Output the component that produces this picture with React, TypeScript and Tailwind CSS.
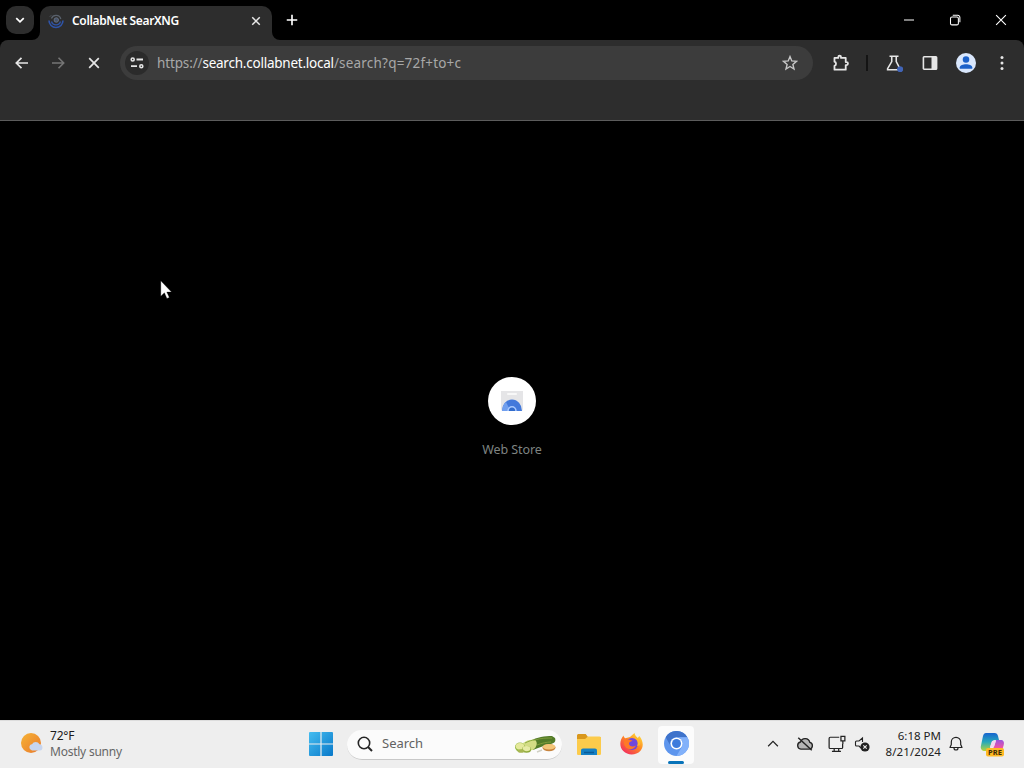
import type { ReactNode } from 'react'

function Icon({ size = 16, className = '', children }: { size?: number; className?: string; children: ReactNode }) {
  return (
    <svg
      width={size}
      height={size}
      viewBox="0 0 16 16"
      fill="none"
      stroke="currentColor"
      strokeWidth="1.6"
      className={`block shrink-0 ${className}`}
    >
      {children}
    </svg>
  )
}

function TabStrip() {
  return (
    <div className="flex h-10 items-start bg-black">
      <button className="ml-1.5 mt-1.5 flex h-7 w-7 items-center justify-center rounded-[10px] bg-[#2d2d2d] text-white">
        <Icon size={12}><path d="M3 5.5l5 5 5-5" strokeWidth="2.3" /></Icon>
      </button>

      <div className="relative ml-1.5 mt-1.5 flex h-[34px] w-[232px] items-center rounded-t-[10px] bg-[#2d2d2d] pb-[5px] pl-2 pr-[11px]">
        <svg className="absolute -left-2 bottom-0" width="8" height="8"><path d="M8 0v8H0a8 8 0 0 0 8-8z" fill="#2d2d2d" /></svg>
        <svg className="absolute -right-2 bottom-0" width="8" height="8"><path d="M0 0v8h8a8 8 0 0 1-8-8z" fill="#2d2d2d" /></svg>
        <Icon className="text-[#2f54a8]">
          <path d="M1 7.5a7 7 0 0 0 14 0" strokeWidth="1.6" />
          <path d="M3.5 8.5a4.7 4.7 0 0 0 9 0" strokeWidth="1.3" />
          <path d="M3.4 5.500A5 5 0 0 1 12.800 6" stroke="#59616c" strokeWidth="1.3" />
          <circle cx="8.300" cy="7" r="2.200" fill="#46536b" stroke="#667080" strokeWidth="1" />
          <path d="M1.5 4l2-2" stroke="#484d55" strokeWidth="1" />
        </Icon>
        <span className="ml-2 flex-1 whitespace-nowrap text-[12px] font-semibold tracking-[-0.34px] text-white">CollabNet SearXNG</span>
        <Icon size={10} className="text-[#e8e8e8]"><path d="M2 2l12 12M14 2L2 14" strokeWidth="2.4" /></Icon>
      </div>

      <button className="ml-[14px] mt-[14px] text-white">
        <Icon size={12}><path d="M8 1v14M1 8h14" strokeWidth="2.2" /></Icon>
      </button>

      <div className="ml-auto flex h-10 items-center text-white">
        <div className="flex w-[46px] justify-center"><Icon size={10}><path d="M0 8h16" strokeWidth="1.6" /></Icon></div>
        <div className="flex w-[46px] justify-center">
          <Icon size={12}>
            <rect x="2" y="4" width="10.5" height="10.5" rx="2" strokeWidth="1.4" />
            <path d="M5 1.7h6.5a3 3 0 0 1 3 3V11" strokeWidth="1.4" />
          </Icon>
        </div>
        <div className="flex w-[46px] justify-center"><Icon size={12}><path d="M1.5 1.5l13 13M14.5 1.5l-13 13" strokeWidth="1.5" /></Icon></div>
      </div>
    </div>
  )
}

function Toolbar() {
  return (
    <div className="bg-black">
      <div className="h-[81px] rounded-t-lg border-b border-[#5c5c5c] bg-[#2d2d2d]">
        <div className="flex h-[46px] items-center pl-[14px] text-[#e6e6e6]">
          <Icon><path d="M14 8H2.5M7.5 2.8L2.3 8l5.2 5.2" strokeWidth="1.7" /></Icon>
          <Icon className="ml-5 text-[#757575]"><path d="M2 8h11.5M8.5 2.8L13.7 8l-5.2 5.2" strokeWidth="1.6" /></Icon>
          <Icon className="ml-5"><path d="M3.2 3.2l9.6 9.6M12.8 3.2l-9.6 9.6" strokeWidth="1.7" /></Icon>

          <div className="ml-[18px] flex h-[34px] w-[693px] items-center rounded-full bg-[#3c3c3c] pl-[5px] pr-[15px]">
            <div className="flex h-6 w-6 items-center justify-center rounded-full bg-[#2b2b2b]">
              <Icon>
                <circle cx="3.7" cy="4.5" r="1.5" />
                <path d="M7.500 4.500h6.500M2 11.200h6" strokeWidth="1.8" />
                <circle cx="12.300" cy="11.200" r="1.500" />
              </Icon>
            </div>
            <span className="ml-2 flex-1 whitespace-nowrap text-[13.5px] text-[#a8a8a8]">
              <span className="tracking-[-0.14px]">https://</span>
              <span className="tracking-[-0.23px] text-white">search.collabnet.local</span>
              <span className="tracking-[0.2px]">/search?q=72f+to+c</span>
            </span>
            <Icon className="text-[#c7c7c7]">
              <path d="M8 1.6l1.8 4.3 4.7.4-3.6 3.1 1.1 4.6L8 11.5 4 14l1.100-4.600-3.600-3.100 4.700-.4z" strokeWidth="1.4" />
            </Icon>
          </div>

          <Icon size={18} className="ml-[19px]">
            <path d="M2.2 3.5h3.4V2.7a1.2 1.2 0 0 1 2.4 0v.8h4.2v3.7h.7a1.3 1.3 0 0 1 0 2.6h-.7v4.1h-10v-3.3a2 2 0 0 0 0-3.8z" strokeWidth="1.6" strokeLinejoin="round" />
          </Icon>
          <div className="ml-4 h-4 w-0.5 bg-[#141414]" />
          <Icon size={18} className="ml-[17px]">
            <path d="M4 2h8M6 2v4.7L2.3 13v1h11v-1L10 6.7V2" strokeWidth="1.4" />
            <circle cx="13.5" cy="13.5" r="2.7" fill="#4164b6" stroke="none" />
          </Icon>
          <Icon className="ml-[19px]">
            <rect x="1.4" y="1.8" width="13.2" height="12.4" rx=".7" />
            <path d="M9.5 2h5v12h-5z" fill="currentColor" stroke="none" />
          </Icon>
          <Icon size={20} className="ml-[18px]">
            <circle cx="8" cy="8" r="8" fill="#d9e7fc" stroke="none" />
            <circle cx="8" cy="5.2" r="2.6" fill="#1b61c9" stroke="none" />
            <path d="M3 12.6v-1.2C3 9.8 5.7 8.9 8 8.9s5 .9 5 2.5v1.2z" fill="#1b61c9" stroke="none" />
          </Icon>
          <Icon className="ml-[18px]">
            <g fill="currentColor" stroke="none">
              <circle cx="8" cy="2.5" r="1.5" />
              <circle cx="8" cy="8" r="1.5" />
              <circle cx="8" cy="13.5" r="1.5" />
            </g>
          </Icon>
        </div>
      </div>
    </div>
  )
}

function NewTabPage() {
  return (
    <main className="relative flex flex-1 flex-col items-center bg-black pt-64">
      <div className="flex h-12 w-12 items-center justify-center rounded-full bg-white">
        <svg width="22" height="20" viewBox="0 0 22 20">
          <path d="M0 0h22v18a2 2 0 0 1-2 2H2a2 2 0 0 1-2-2z" fill="#e5e5e7" />
          <path d="M7 3h8" stroke="#f8f8f8" strokeWidth="2" strokeLinecap="round" />
          <path d="M1 20a10 11.5 0 0 1 20 0z" fill="#4379db" />
          <path d="M1 20a10 11.5 0 0 1 4-9l3 6-1 3z" fill="#719fee" />
          <path d="M6.3 20a4.7 5 0 0 1 9.4 0z" fill="#a9c9ff" />
          <path d="M7.8 20a3.2 3.5 0 0 1 6.4 0z" fill="#326ccc" />
        </svg>
      </div>
      <div className="mt-4 text-[12.5px] leading-[17px] tracking-[-0.08px] text-[#7e8482]">Web Store</div>

      {/* mouse pointer */}
      <svg className="absolute left-40 top-[159px]" width="13" height="20" viewBox="0 0 13 20">
        <path d="M.8.8v15.4l3.6-3.4 2.500 5.600 2.400-1-2.500-5.300h4.700z" fill="#fff" stroke="#000" strokeWidth=".3" />
      </svg>
    </main>
  )
}

function WindowsLogo() {
  return (
    <svg width="24" height="24" viewBox="0 0 24 24">
      <defs>
        <linearGradient id="win" x1="0" y1="0" x2="24" y2="24" gradientUnits="userSpaceOnUse">
          <stop stopColor="#45bdf0" />
          <stop offset="1" stopColor="#0878c9" />
        </linearGradient>
      </defs>
      <path d="M1 0h10.4v11.4H0V1a1 1 0 0 1 1-1zM12.6 0H23a1 1 0 0 1 1 1v10.4H12.6zM0 12.6h11.4V24H1a1 1 0 0 1-1-1zM12.6 12.6H24V23a1 1 0 0 1-1 1H12.6z" fill="url(#win)" />
    </svg>
  )
}

function Zucchini() {
  return (
    <svg width="42" height="19" viewBox="0 0 42 19">
      <path d="M15 6C22 2 30 1 37 1l3 2c1 3 0 5-4 6-7 1-12 4-18 6z" fill="#527b29" />
      <path d="M20 5c6-2 12-2 17-2M22 10c5-2 10-3 14-3" stroke="#7f9b3b" fill="none" />
      <path d="M8 8c4-3 8-4 12-3 3 2 2 7-2 10l-7 1z" fill="#d3dc85" />
      <path d="M10 8c4-2 7-3 10-3" stroke="#8cab43" fill="none" />
      <ellipse cx="5" cy="12" rx="5" ry="4.5" fill="#95b843" />
      <ellipse cx="5" cy="11.3" rx="4.3" ry="3.4" fill="#e5e99c" />
      <ellipse cx="11.5" cy="14.5" rx="4.6" ry="3.3" fill="#8eaa3c" />
      <ellipse cx="11.5" cy="13.6" rx="3.9" ry="2.6" fill="#e6eba5" />
      <ellipse cx="6" cy="16" rx="3.5" ry="1.8" fill="#a7b752" />
      <ellipse cx="34" cy="12.6" rx="6.5" ry="3.6" fill="#c8843e" />
      <ellipse cx="34" cy="11.8" rx="6.3" ry="2.8" fill="#f3c679" />
      <path d="M22 17l5-2" stroke="#d0d0c4" strokeWidth="1.5" />
    </svg>
  )
}

function FolderIcon() {
  return (
    <svg width="26" height="24" viewBox="0 0 26 24">
      <path d="M1 4V2.5C1 1.5 1.8 1 2.7 1h7L12 4h11.5c1 0 1.5.7 1.5 1.6V20H1z" fill="#d9971c" />
      <path d="M1 6h8l3-2.500h11.500c1 0 1.500.8 1.500 1.500v15.500c0 1-.6 1.500-1.500 1.500h-21C1.600 22 1 21.500 1 20.500z" fill="#fccb4b" />
      <path d="M5 22v-4.5c0-1.3.8-2 2-2h12c1.200 0 2 .7 2 2V22z" fill="#1580c4" />
      <path d="M8 19.5h10" stroke="#0b5b98" strokeWidth="1.5" />
    </svg>
  )
}

function FirefoxIcon() {
  return (
    <svg width="24" height="24" viewBox="0 0 24 24">
      <defs>
        <linearGradient id="fox" x1="20" y1="2" x2="5" y2="22" gradientUnits="userSpaceOnUse">
          <stop stopColor="#ffdf3c" />
          <stop offset=".45" stopColor="#ff8a22" />
          <stop offset="1" stopColor="#f22b60" />
        </linearGradient>
      </defs>
      <path d="M3.5 3.5c.2 1.500 1 2.200 1.800 2.700L10 5l4.500-4c.5 2.800 2 3.500 3.300 5l1.500-2c4.200 5 4.500 11 1.200 14.700-4.500 5-12.800 5-17.200.4C-.8 14.800-.6 8.500 3.500 3.500z" fill="url(#fox)" />
      <circle cx="12" cy="12" r="6" fill="#7048de" />
      <path d="M4.500 8c3-2 5 0 8 .5-1 1.500-3.500 1-3.500 3 0 3 4 4 7 2-1.500 4-8 5-10.500 1.500C3.800 13 3.500 10 4.500 8z" fill="#ff7927" />
      <path d="M13 5c4 1 6 5 4 9l3-1c1-4-1-8-7-8z" fill="#ffba2c" />
    </svg>
  )
}

function ChromiumIcon() {
  return (
    <svg width="25" height="25" viewBox="0 0 24 24">
      <circle cx="12" cy="12" r="12" fill="#5d95ed" />
      <path d="M1.6 6A12 12 0 0 1 22.4 6H12a6 6 0 0 0-5.2 9z" fill="#3e73cb" />
      <path d="M22.4 6A12 12 0 0 1 12 24l5.2-9A6 6 0 0 0 12 6z" fill="#82b1fa" />
      <circle cx="12" cy="12" r="5.8" fill="#fff" />
      <circle cx="12" cy="12" r="4.3" fill="#3d7bdc" />
    </svg>
  )
}

function CopilotIcon() {
  return (
    <svg width="25" height="25" viewBox="0 0 25 25">
      <defs>
        <linearGradient id="cop" x2="0" y2="1">
          <stop stopColor="#1764cf" />
          <stop offset=".5" stopColor="#26a9bb" />
          <stop offset="1" stopColor="#b5d63b" />
        </linearGradient>
        <linearGradient id="cop2" x2="0" y2="1">
          <stop stopColor="#9b56de" />
          <stop offset=".5" stopColor="#ed55a3" />
          <stop offset="1" stopColor="#ff8a46" />
        </linearGradient>
      </defs>
      <path d="M6 1h8.500c2 0 3 1 3.500 3l1 4h-4c-2 0-3 1-3.500 3L9 19H5c-3 0-5-2-4-5.500L3 4c.5-2 1.500-3 3-3z" fill="url(#cop)" />
      <path d="M16 8h4.500c3 0 4 2 3.200 5l-2 7c-1 2-2 3-4 3h-9c2 0 3-1 3.500-3z" fill="url(#cop2)" />
      <path d="M12 9h4l-2 6h-4z" fill="#f3d9ee" />
      <rect x="6" y="16" width="18" height="8.5" rx="2" fill="#ffba24" />
      <text x="15" y="23" textAnchor="middle" fontSize="7.5" fontWeight="700" fill="#3b2a0b">PRE</text>
    </svg>
  )
}

function Tray() {
  return (
    <div className="ml-auto flex h-full items-center pb-px text-[#222]">
      <Icon size={12}><path d="M1.5 11L8 4.5l6.5 6.5" /></Icon>
      <Icon size={18} className="ml-[17px]">
        <path d="M4.3 12.5h7.5a3 3 0 0 0 .5-5.9A4.3 4.3 0 0 0 4 6.200a3.200 3.200 0 0 0 .3 6.300z" fill="#b5b5b5" strokeWidth="1.2" />
        <path d="M2 2.5l12 11" strokeWidth="1.3" />
      </Icon>
      <Icon size={18} className="ml-[14px]">
        <path d="M10 2H2c-.6 0-1 .4-1 1v8c0 .6.4 1 1 1h10c.6 0 1-.4 1-1V8M5.500 12v2.500M9.500 12v2.500M3.500 14.500h8" strokeWidth="1.1" />
        <path d="M11.500 1.300h3.500v4h-3.500zM13.200 5.300V8" strokeWidth="1.1" />
      </Icon>
      <Icon size={16} className="ml-2">
        <path d="M8.5 6V2L5 5H2.5c-.6 0-1 .4-1 1v3c0 .6.4 1 1 1H5l2 2" strokeWidth="1.1" />
        <circle cx="11" cy="11" r="4.6" fill="#222" stroke="none" />
        <path d="M9.300 9.300l3.400 3.400M12.700 9.300l-3.400 3.400" stroke="#eee" strokeWidth="1.1" />
      </Icon>
      <div className="ml-[7px] w-[64px] whitespace-nowrap text-right text-[11.5px] leading-4">
        <div>6:18 PM</div>
        <div className="tracking-[0.1px]">8/21/2024</div>
      </div>
      <Icon size={16} className="ml-[7px]">
        <path d="M2 11.500h12l-1.300-3V6A4.700 4.700 0 0 0 3.300 6v2.500zM6 12a2 2 0 0 0 4 0" strokeWidth="1.2" strokeLinejoin="round" />
      </Icon>
      <div className="ml-[16px] mr-[19px]"><CopilotIcon /></div>
    </div>
  )
}

function Taskbar() {
  return (
    <footer className="flex h-12 items-center border-t border-[#dcdcdc] bg-[#eee]">
      <div className="flex w-[309px] items-center pb-px pl-5">
        <svg width="24" height="24" viewBox="0 0 24 24">
          <defs><linearGradient id="sun" x2="1" y2="1"><stop stopColor="#f6b336" /><stop offset="1" stopColor="#e9792b" /></linearGradient></defs>
          <circle cx="11" cy="11" r="10" fill="url(#sun)" />
          <path d="M12 18.500a3.200 3.200 0 0 1 0-6.300 4.200 4.200 0 0 1 7.500 0 3.200 3.200 0 0 1 .5 6.300z" fill="#c7d5ef" />
        </svg>
        <div className="ml-1.5 whitespace-nowrap text-[12px] leading-4">
          <div className="tracking-[-0.2px] text-[#1b1b1b]">72°F</div>
          <div className="tracking-[-0.24px] text-[#666]">Mostly sunny</div>
        </div>
      </div>

      <div className="pb-px"><WindowsLogo /></div>
      <div className="ml-[14px] flex h-[30px] w-[215px] items-center rounded-full border-b border-[#c8c8c8] bg-[#fbfbfb] pl-2.5 pr-[5px]">
        <Icon size={16} className="text-[#252525]"><circle cx="7" cy="7" r="5.7" /><path d="M11 11l4 4" strokeWidth="1.9" /></Icon>
        <span className="ml-[9px] flex-1 text-[13px] text-[#626262]">Search</span>
        <Zucchini />
      </div>
      <div className="ml-[14px]"><FolderIcon /></div>
      <div className="ml-[18px] pb-px"><FirefoxIcon /></div>
      <div className="ml-[14px] flex h-[38px] w-[36px] flex-col items-center rounded bg-[#fcfcfc] pt-[5px]">
        <ChromiumIcon />
        <div className="mt-[5px] h-[3px] w-4 shrink-0 rounded-full bg-[#0873b9]" />
      </div>

      <Tray />
    </footer>
  )
}

export default function App() {
  return (
    <div className="flex h-screen w-screen flex-col overflow-hidden bg-black font-['Noto_Sans','Open_Sans',sans-serif]">
      <TabStrip />
      <Toolbar />
      <NewTabPage />
      <Taskbar />
    </div>
  )
}
